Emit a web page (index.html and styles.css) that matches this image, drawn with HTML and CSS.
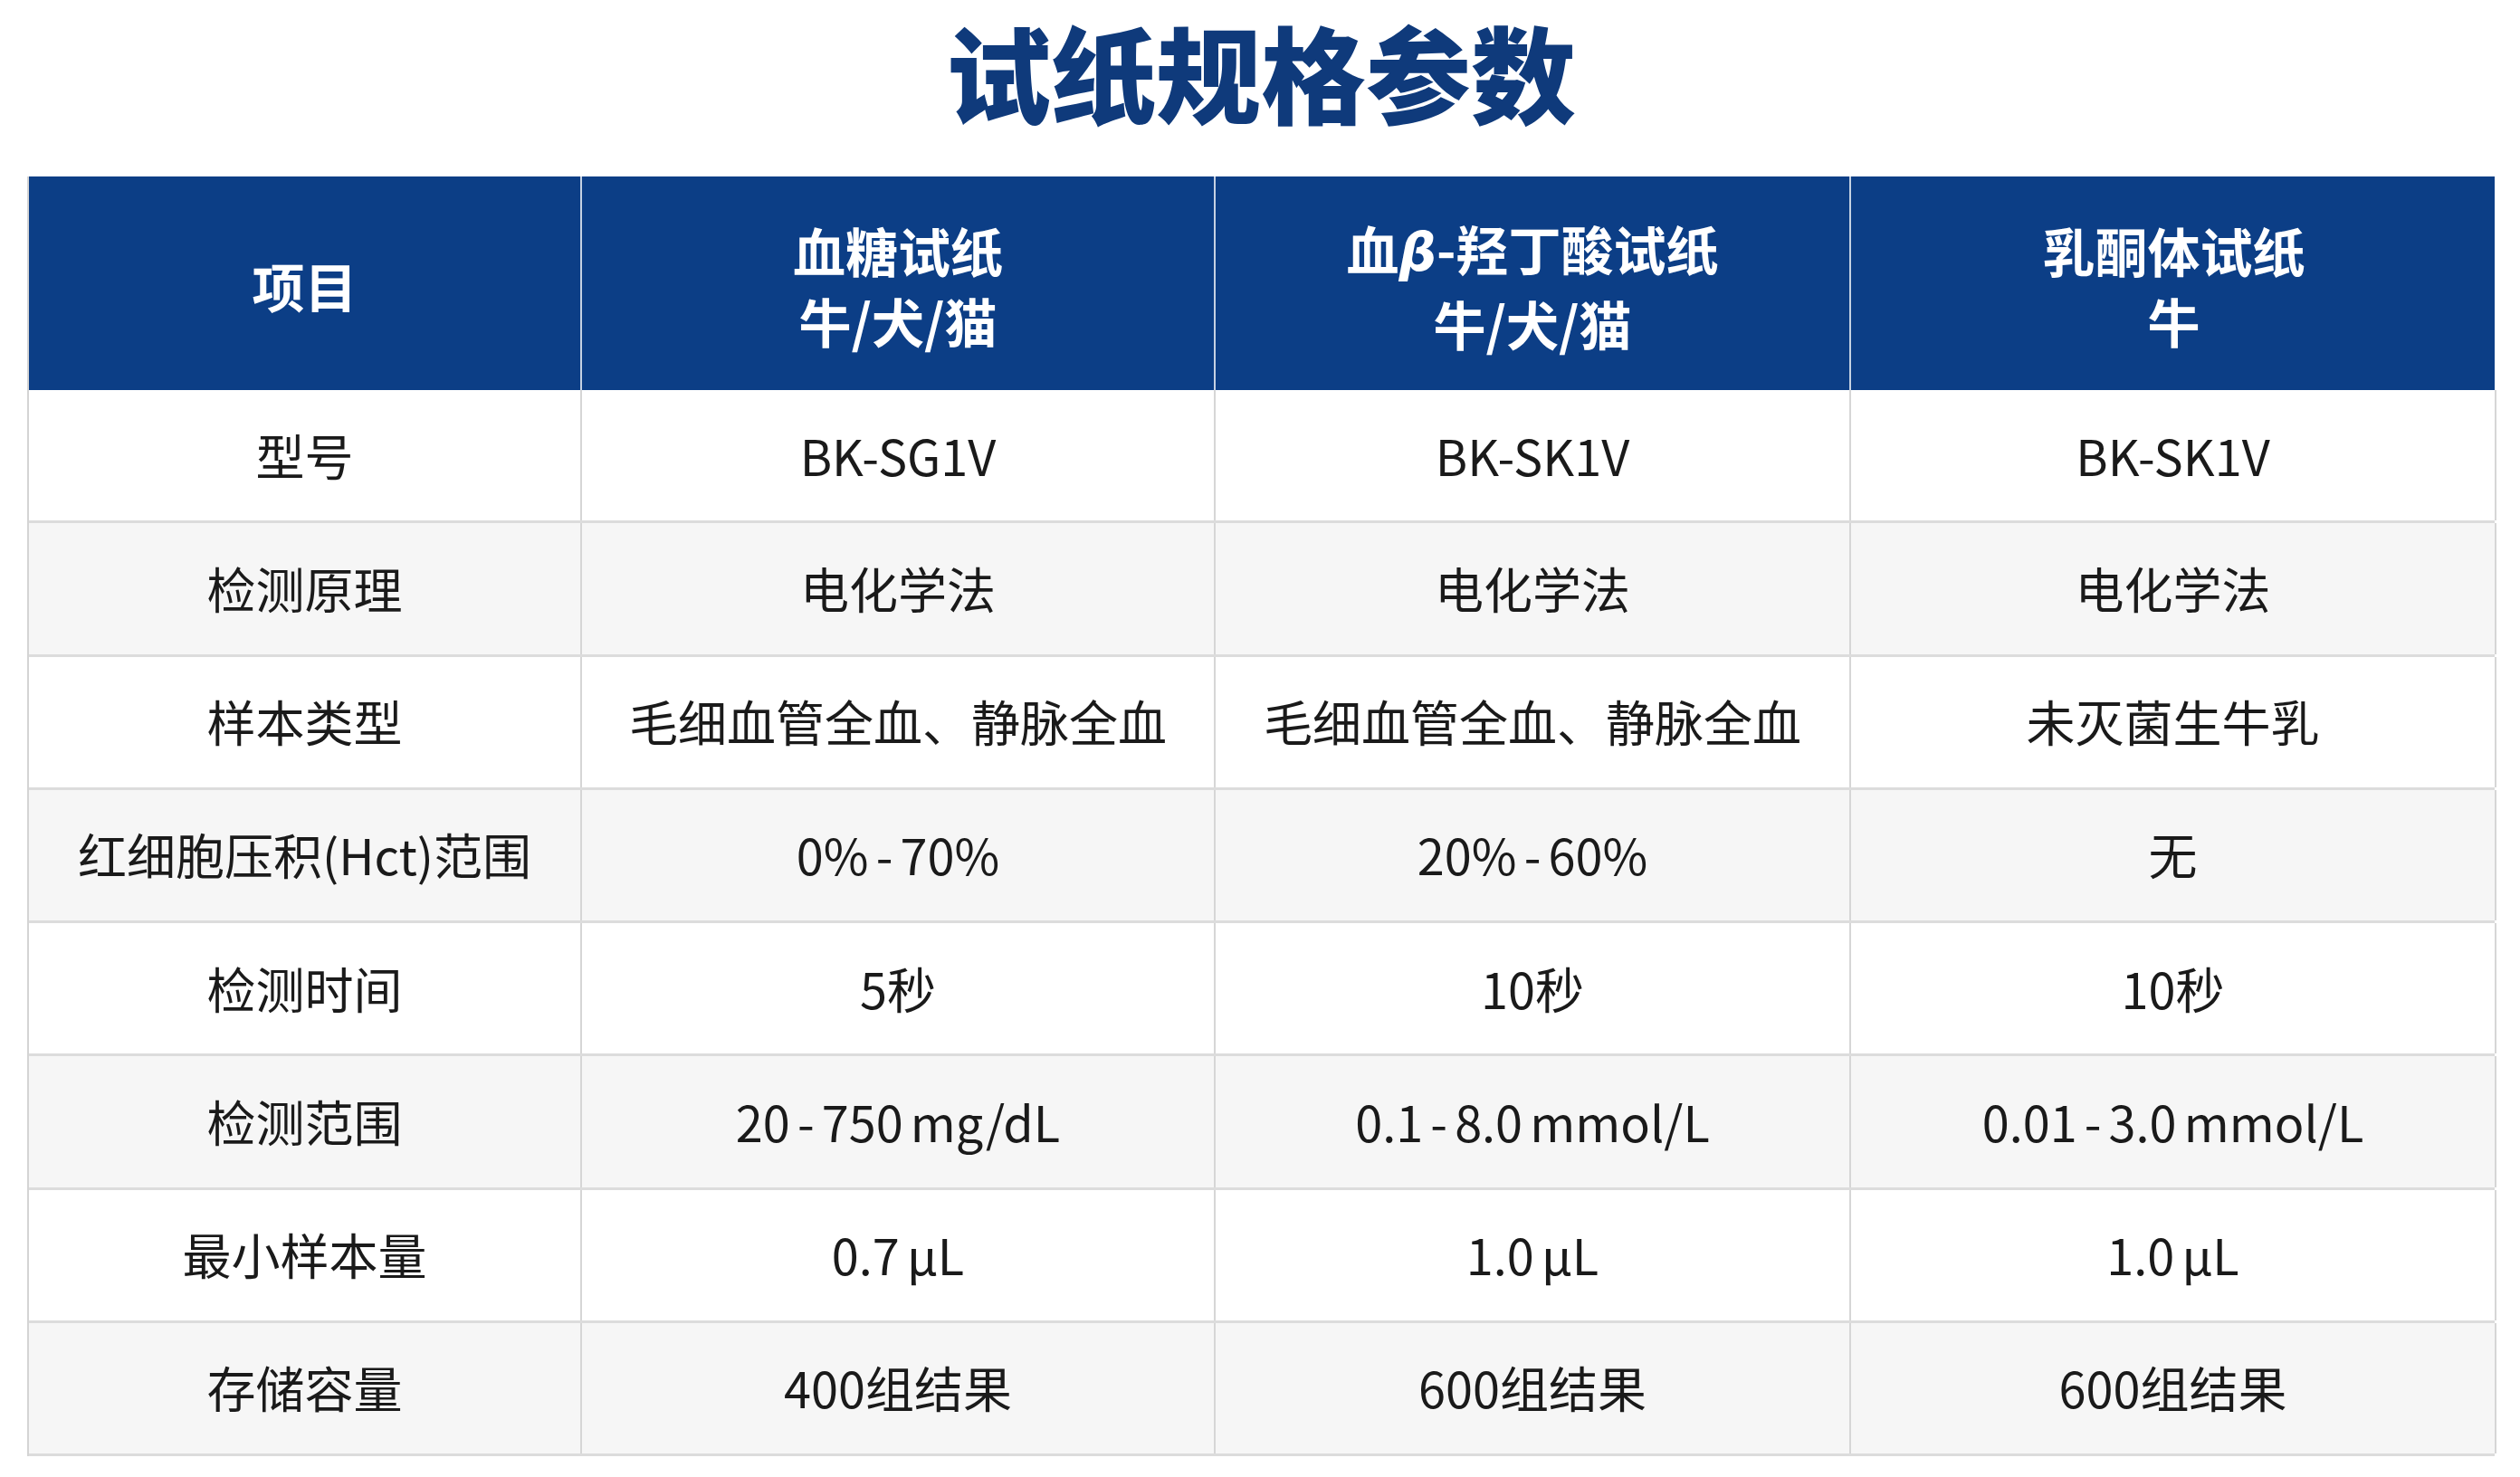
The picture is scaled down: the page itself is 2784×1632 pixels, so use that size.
FILE: index.html
```html
<!DOCTYPE html>
<html lang="zh-CN">
<head>
<meta charset="utf-8">
<title>试纸规格参数</title>
<link rel="stylesheet" href="styles.css">
</head>
<body>
<div class="page">
  <h1 class="title">试纸规格参数</h1>
  <div class="spec-table">
    <div class="row head">
      <div class="cell"><span class="label">项目</span></div>
      <div class="cell"><span class="label">血糖试纸<br>牛/犬/猫</span></div>
      <div class="cell"><span class="label">血<i class="beta">β</i>-羟丁酸试纸<br>牛/犬/猫</span></div>
      <div class="cell"><span class="label">乳酮体试纸<br>牛</span></div>
    </div>
    <div class="row">
      <div class="cell">型号</div>
      <div class="cell">BK-SG1V</div>
      <div class="cell">BK-SK1V</div>
      <div class="cell">BK-SK1V</div>
    </div>
    <div class="row alt">
      <div class="cell">检测原理</div>
      <div class="cell">电化学法</div>
      <div class="cell">电化学法</div>
      <div class="cell">电化学法</div>
    </div>
    <div class="row">
      <div class="cell">样本类型</div>
      <div class="cell">毛细血管全血、静脉全血</div>
      <div class="cell">毛细血管全血、静脉全血</div>
      <div class="cell">未灭菌生牛乳</div>
    </div>
    <div class="row alt">
      <div class="cell">红细胞压积(Hct)范围</div>
      <div class="cell">0% - 70%</div>
      <div class="cell">20% - 60%</div>
      <div class="cell">无</div>
    </div>
    <div class="row">
      <div class="cell">检测时间</div>
      <div class="cell">5秒</div>
      <div class="cell">10秒</div>
      <div class="cell">10秒</div>
    </div>
    <div class="row alt">
      <div class="cell">检测范围</div>
      <div class="cell">20 - 750 mg/dL</div>
      <div class="cell">0.1 - 8.0 mmol/L</div>
      <div class="cell">0.01 - 3.0 mmol/L</div>
    </div>
    <div class="row">
      <div class="cell">最小样本量</div>
      <div class="cell">0.7 µL</div>
      <div class="cell">1.0 µL</div>
      <div class="cell">1.0 µL</div>
    </div>
    <div class="row alt">
      <div class="cell">存储容量</div>
      <div class="cell">400组结果</div>
      <div class="cell">600组结果</div>
      <div class="cell">600组结果</div>
    </div>
  </div>
</div>
</body>
</html>
```

FILE: styles.css
```css
* {
  box-sizing: border-box;
}

html, body {
  margin: 0;
  padding: 0;
  background: #ffffff;
}

body {
  font-family: "Noto Sans CJK SC", "Noto Sans", sans-serif;
  color: #1a1a1a;
}

.page {
  width: 2784px;
  height: 1632px;
  padding-left: 30px;
  padding-top: 2px;
}

.title {
  margin: 0 0 43px 0;
  width: 2726px;
  line-height: 150px;
  font-size: 116px;
  font-weight: 900;
  color: #0f3a7b;
  text-align: center;
}

.spec-table {
  width: 2726px;
  display: flex;
  flex-direction: column;
  border-left: 2px solid #d4d4d4;
}

.row {
  display: grid;
  grid-template-columns: 611px 700px 702px 713px;
  height: 147.25px;
  background: #ffffff;
  border-bottom: 3px solid #dcdcdc;
}

.row.alt {
  background: #f6f6f6;
}

.cell {
  display: flex;
  align-items: center;
  justify-content: center;
  text-align: center;
  font-size: 54px;
  font-weight: 400;
  line-height: 1.2;
  border-right: 2px solid #d6d6d6;
  white-space: nowrap;
  word-spacing: -4px;
}

.row.head {
  height: 236px;
  background: #0c3e86;
  border-bottom: 0;
}

.row.head .cell {
  color: #ffffff;
  font-size: 58px;
  font-weight: 700;
  line-height: 78px;
  padding-top: 4px;
  border-right: 2px solid #c6d1e2;
  word-spacing: 0;
}

.row.head .cell:last-child {
  border-right: 0;
}

.label {
  display: block;
}

.beta {
  font-style: italic;
  font-family: "DejaVu Sans", sans-serif;
  font-weight: 700;
}
```
